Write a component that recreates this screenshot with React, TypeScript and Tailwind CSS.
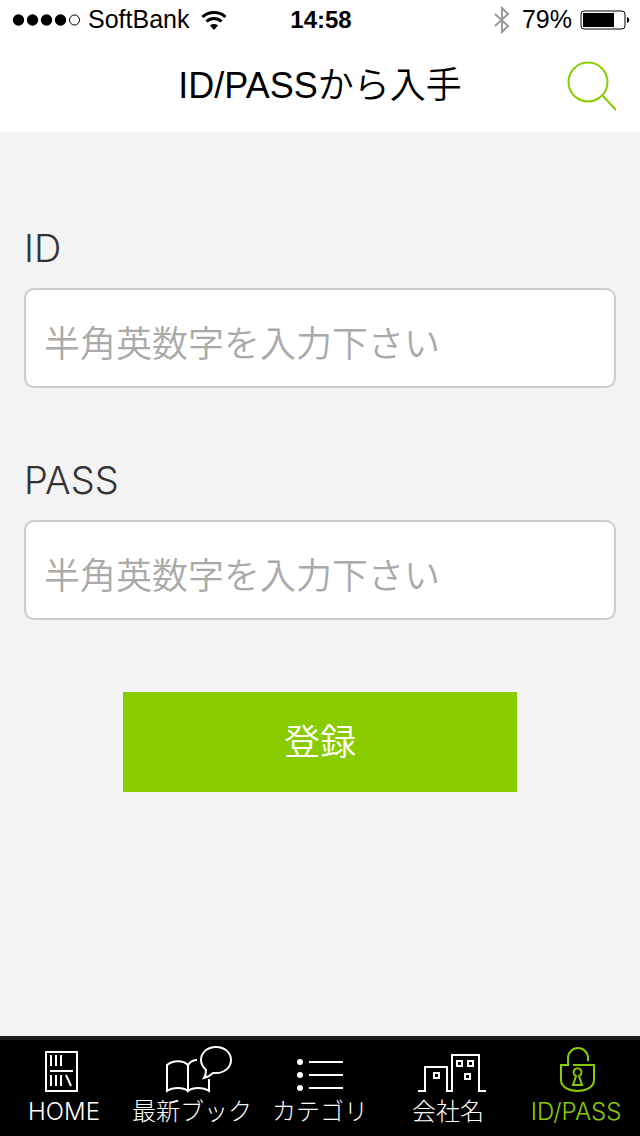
import { useState } from "react";
import type { ReactNode } from "react";

const TABS = [
  { id: "home", label: "HOME", icon: <ShelfIcon /> },
  { id: "new", label: "最新ブック", icon: <BookIcon /> },
  { id: "category", label: "カテゴリ", icon: <ListIcon /> },
  { id: "company", label: "会社名", icon: <BuildingIcon /> },
  { id: "idpass", label: "ID/PASS", icon: <LockIcon /> },
];

function TabIcon({ children }: { children: ReactNode }) {
  return (
    <svg
      className="overflow-visible"
      width="72"
      height="52"
      viewBox="0 0 72 52"
      fill="none"
      stroke="currentColor"
      strokeWidth="2"
      aria-hidden
    >
      {children}
    </svg>
  );
}

function ShelfIcon() {
  return (
    <TabIcon>
      <path d="M18 12h31v39H18z" />
      <path d="M23 15v11M28 15v11M33 15v11M22 31h23M23 35v11M28 35v11M33 35v11M38 35l5 11" />
    </TabIcon>
  );
}

function BookIcon() {
  return (
    <TabIcon>
      <path d="M32 51c-5-4-15-4-21 0V25c6-5 16-5 21 0v26c5-4 15-4 21 0V39M32 25c2-3 5-5 9-5" />
      <path d="M50 30c-3-3-5-6-5-10 0-7 6-13 15-13s15 6 15 13-6 13-15 13h-3c-2 2-5 4-9 5 2-3 2-5 2-8z" />
    </TabIcon>
  );
}

function ListIcon() {
  return (
    <TabIcon>
      <g fill="currentColor" stroke="none">
        <circle cx="16" cy="22" r="3" />
        <circle cx="16" cy="35" r="3" />
        <circle cx="16" cy="48" r="3" />
      </g>
      <path d="M25 22h34M25 35h34M25 48h34" />
    </TabIcon>
  );
}

function BuildingIcon() {
  return (
    <TabIcon>
      <path d="M6 51h7V27h22v24h5V15h27v36h7" />
      <path d="M22 33h5v5h-5zM45 21h5v5h-5zM56 21h5v5h-5zM53 34h5v5h-5z" />
    </TabIcon>
  );
}

function LockIcon() {
  return (
    <TabIcon>
      <path d="M33 25h21v15c0 7-8 11-16.500 11S21 47 21 40V25h7v-7a10 10 0 0 1 20 0v3" />
      <path d="M36 36a4 4 0 1 1 3 0l3 9h-9z" />
    </TabIcon>
  );
}

function StatusBar() {
  return (
    <div className="flex h-10 items-center pr-2.5 pl-3 font-['Liberation_Sans',sans-serif] text-[25px] text-black">
      <div className="flex flex-1 items-center">
        <svg className="shrink-0" width="70" height="12" viewBox="0 0 70 12" aria-hidden>
          <circle cx="6.500" cy="6" r="5.700" />
          <circle cx="20.500" cy="6" r="5.700" />
          <circle cx="34.500" cy="6" r="5.700" />
          <circle cx="48.500" cy="6" r="5.700" />
          <circle cx="62.500" cy="6" r="5" fill="none" stroke="#000" />
        </svg>
        <span className="pl-1.5">SoftBank</span>
        <svg className="ml-3 shrink-0" width="26" height="20" viewBox="0 0 26 20" fill="none" stroke="#000" strokeWidth="3" aria-hidden>
          <path d="M1.500 7c6-6 17-6 23 0M5.500 11.500c4-4 11-4 15 0" />
          <path d="M13 20l-4-4.500c2-2 6-2 8 0z" fill="#000" stroke="none" />
        </svg>
      </div>
      <span className="text-center text-2xl font-bold">14:58</span>
      <div className="flex flex-1 items-center justify-end">
        <svg className="mr-3" width="16" height="28" viewBox="0 0 16 28" fill="none" stroke="#999" strokeWidth="2" aria-hidden>
          <path d="M1 8l13 12-6 6V2l6 6L1 20" />
        </svg>
        <span>79%</span>
        <svg className="ml-2" width="50" height="20" viewBox="0 0 50 20" aria-hidden>
          <rect x="1" y="1" width="44" height="18" rx="3" fill="none" stroke="#000" />
          <path d="M3 3h31v14H3zM47 7c3 1 3 5 0 6z" />
        </svg>
      </div>
    </div>
  );
}

function Field({ id, label, type }: { id: string; label: string; type: string }) {
  return (
    <div>
      <label htmlFor={id} className="block text-[38px] leading-10 font-light text-[#333]">
        {label}
      </label>
      <input
        id={id}
        type={type}
        placeholder="半角英数字を入力下さい"
        className="mt-5 block h-[100px] w-full rounded-[10px] border-2 border-[#ccc] bg-white px-[18px] pt-3 text-4xl font-[350] text-[#333] placeholder:text-[#aaa]"
      />
    </div>
  );
}

export default function App() {
  const [active, setActive] = useState("idpass");

  return (
    <div className="flex min-h-screen flex-col bg-[#f3f3f3] font-['Inter','Noto_Sans_CJK_JP',sans-serif]">
      <header className="bg-white">
        <StatusBar />
        <div className="grid h-[92px] grid-cols-[1fr_auto_1fr] items-center px-6">
          <h1 className="col-start-2 font-['Liberation_Sans','Noto_Sans_CJK_JP',sans-serif] text-4xl font-[350] text-black">
            ID/PASSから入手
          </h1>
          <button type="button" aria-label="検索" className="justify-self-end text-[#8c0]">
            <svg width="50" height="50" viewBox="0 0 50 50" fill="none" stroke="currentColor" strokeWidth="2" aria-hidden>
              <circle cx="22" cy="21" r="19.500" />
              <path d="M36 34l14 15" />
            </svg>
          </button>
        </div>
      </header>

      <main className="flex-1 px-6 pt-24">
        <form className="flex flex-col gap-18" onSubmit={(e) => e.preventDefault()}>
          <Field id="login-id" label="ID" type="text" />
          <Field id="login-pass" label="PASS" type="password" />
          <button
            type="submit"
            className="h-[100px] w-2/3 self-center bg-[#8c0] text-4xl font-[350] text-white"
          >
            登録
          </button>
        </form>
      </main>

      <nav className="grid grid-cols-5 border-t-4 border-[#1a1d1a] bg-black">
        {TABS.map((tab) => (
          <button
            key={tab.id}
            type="button"
            onClick={() => setActive(tab.id)}
            aria-current={active === tab.id ? "page" : undefined}
            className={`flex h-24 flex-col items-center text-2xl leading-10 font-light whitespace-nowrap ${
              active === tab.id ? "text-[#8c0]" : "text-white"
            }`}
          >
            {tab.icon}
            <span>{tab.label}</span>
          </button>
        ))}
      </nav>
    </div>
  );
}
